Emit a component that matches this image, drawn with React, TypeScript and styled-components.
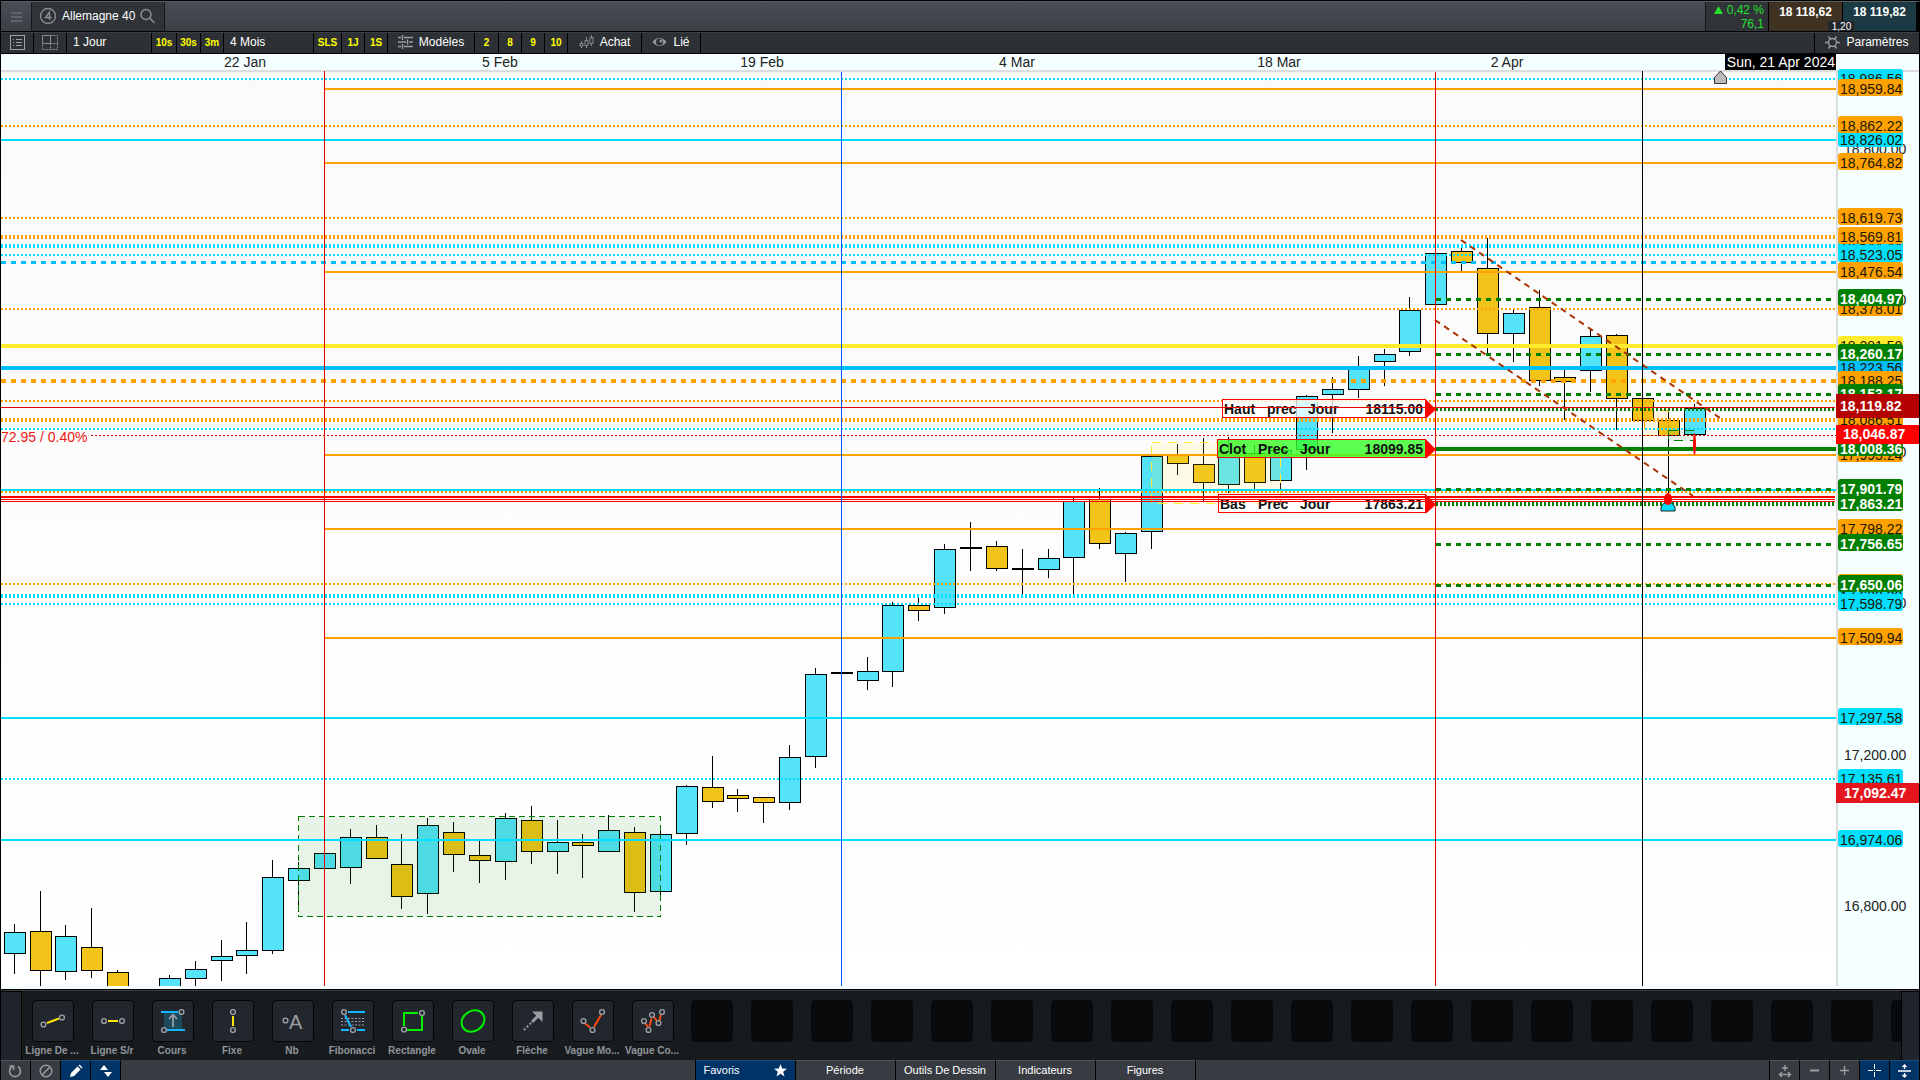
import React from 'react';
import styled, { createGlobalStyle } from 'styled-components';

const GlobalStyle = createGlobalStyle`
  * { box-sizing: border-box; }
  body {
    margin: 0;
    background: #000;
    font-family: "Liberation Sans", Arial, sans-serif;
    font-size: 12px;
  }
  button, select {
    margin: 0;
    padding: 0;
    border: 0;
    border-radius: 0;
    background: none;
    color: inherit;
    font: inherit;
  }
`;

/* ---------- colours ---------- */
const ORANGE = '#ffa200';
const CYAN = '#00dfff';
const SKY = '#00bfff';
const GREEN = '#008000';
const YELLOW = '#ffeb2d';
const RED = '#ff0000';
const UP = '#55e3f9';
const DOWN = '#f2c318';

/* ---------- shell ---------- */
const Shell = styled.div`
  display: flex;
  flex-direction: column;
  height: 100vh;
  padding: 1px 1px 0;
  background: #000;
  color: #fff;
  overflow: hidden;
`;

const Header = styled.header`
  display: flex;
  height: 30px;
  flex: none;
  background: linear-gradient(#494e56, #3b4047);
  border-top: 1px solid #5a5f66;
`;

const MenuButton = styled.button`
  display: grid;
  place-items: center;
  width: 31px;
  border-right: 1px solid #15181b;
`;

const MarketTab = styled.button`
  display: flex;
  align-items: center;
  gap: 5px;
  width: 133px;
  padding: 0 0 2px 7px;
  background: #303439;
  border-right: 1px solid #15181b;
`;

const Spacer = styled.div`
  flex: 1;
`;

const Change = styled.div`
  display: flex;
  flex-direction: column;
  align-items: flex-end;
  width: 63px;
  padding: 1px 4px 0 0;
  background: #303439;
  border-left: 1px solid #15181b;
  color: #22e02c;
  line-height: 14px;
  svg { margin-right: 4px; }
`;

const Quotes = styled.div`
  position: relative;
  display: flex;
  gap: 1px;
  padding: 0 3px 0 1px;
  background: #000;
`;

const Quote = styled.button<{ $bg: string }>`
  width: 73px;
  padding-bottom: 10px;
  background: ${(p) => p.$bg};
  color: #fff;
  font-weight: bold;
`;

const Spread = styled.span`
  position: absolute;
  right: 64px;
  bottom: 0;
  width: 27px;
  height: 10px;
  background: #23272b;
  font-size: 10px;
  line-height: 11px;
  text-align: center;
`;

const Toolbar = styled.nav`
  display: flex;
  flex: none;
  height: 21px;
  margin: 1px 0;
  background: #2d3135;
  border-top: 1px solid #393e43;
`;

const Tool = styled.button<{ $w: number }>`
  display: flex;
  align-items: center;
  justify-content: center;
  gap: 6px;
  flex: none;
  width: ${(p) => p.$w}px;
  padding-bottom: 2px;
  border-right: 1px solid #000;
`;

const Period = styled.select<{ $w: number }>`
  flex: none;
  appearance: none;
  width: ${(p) => p.$w}px;
  padding: 0 0 2px 6px;
  border-right: 1px solid #000;
`;

const Shortcut = styled(Tool)`
  color: #ffff00;
  font-size: 10px;
  font-weight: bold;
  padding-bottom: 1px;
`;

const Settings = styled(Tool)`
  border-right: 0;
  border-left: 1px solid #000;
`;

/* ---------- chart ---------- */
const TimeAxis = styled.div`
  position: relative;
  flex: none;
  height: 16px;
  background: #f5ffff;
  color: #222;
  font-size: 14px;
  line-height: 16px;
`;

const DateLabel = styled.span`
  position: absolute;
  top: 0;
  transform: translateX(-50%);
  white-space: nowrap;
`;

const CursorDate = styled.span`
  position: absolute;
  right: 83px;
  top: 0;
  height: 16px;
  padding: 0 1px 0 2px;
  background: #000;
  color: #fff;
  line-height: 16px;
  white-space: nowrap;
`;

const ChartArea = styled.main`
  display: grid;
  grid-template-columns: minmax(0, 1fr) 83px;
  flex: 1;
  min-height: 0;
  background: #f5ffff;
  padding-bottom: 3px;
`;

const Plot = styled.svg`
  display: block;
  width: 100%;
  height: 100%;
  background: linear-gradient(#fafafa, #fff);
  font-family: "Liberation Sans", Arial, sans-serif;
  font-size: 14px;
`;

const PriceAxis = styled.aside`
  position: relative;
  border-top: 2px solid #ddd;
  border-left: 2px solid #ddd;
  background: #f5ffff;
  color: #222;
  font-size: 14px;
  line-height: 21px;
`;

const AxisPrice = styled.span`
  position: absolute;
  left: 6px;
`;

const Tag = styled.span<{ $bg: string }>`
  position: absolute;
  left: 0;
  width: 65px;
  height: 17px;
  padding-left: 2px;
  border-radius: 3px;
  background: ${(p) => p.$bg};
  color: ${(p) => (p.$bg === GREEN ? '#fff' : '#1a1500')};
  font-weight: ${(p) => (p.$bg === GREEN ? 'bold' : 'normal')};
  overflow: hidden;
`;

const LiveTag = styled.span<{ $bg: string; $h: number; $pad: number }>`
  position: absolute;
  left: -2px;
  right: 0;
  height: ${(p) => p.$h}px;
  padding-left: ${(p) => p.$pad}px;
  background: ${(p) => p.$bg};
  color: #fff;
  font-weight: bold;
  line-height: ${(p) => p.$h}px;
`;

/* ---------- drawing tools ---------- */
const Palette = styled.section`
  display: flex;
  flex: none;
  height: 70px;
  margin-top: 1px;
  padding-top: 1px;
  border-top: 1px solid #3a3f44;
  background: #171b1e;
`;

const Edge = styled.div<{ $w: number }>`
  flex: none;
  width: ${(p) => p.$w}px;
  background: #20242c;
  outline: 1px solid #000;
`;

const Slots = styled.div`
  display: flex;
  flex: 1;
  min-width: 0;
  padding: 8px 0 0 1px;
  overflow: hidden;
`;

const Slot = styled.button`
  display: flex;
  flex: none;
  flex-direction: column;
  align-items: center;
  gap: 3px;
  width: 60px;
  color: #90959b;
  font-size: 10px;
  font-weight: bold;
  line-height: 12px;
  white-space: nowrap;
`;

const Tile = styled.span<{ $empty?: boolean }>`
  width: 42px;
  height: 42px;
  margin-left: ${(p) => (p.$empty ? 0 : 2)}px;
  border: 1px solid ${(p) => (p.$empty ? '#0b0c0e' : '#050607')};
  border-radius: 4px;
  background: ${(p) => (p.$empty ? '#090a0c' : '#22272e')};
  svg { display: block; margin: -1px; }
`;

const StatusBar = styled.footer`
  display: flex;
  flex: none;
  justify-content: space-between;
  height: 20px;
  background: #383b42;
`;

const Group = styled.div`
  display: flex;
`;

const StatusButton = styled.button<{ $on?: boolean; $left?: boolean }>`
  display: grid;
  place-items: center;
  width: 30px;
  border-top: 1px solid ${(p) => (p.$on ? '#1b4a7c' : '#505358')};
  border-right: ${(p) => (p.$left ? '0' : '1px solid #000')};
  border-left: ${(p) => (p.$left ? '1px solid #000' : '0')};
  background: ${(p) => (p.$on ? '#003366' : '#383b42')};
`;

const Tab = styled.button<{ $on?: boolean }>`
  display: flex;
  align-items: center;
  justify-content: ${(p) => (p.$on ? 'space-between' : 'center')};
  width: 100px;
  padding: 0 ${(p) => (p.$on ? 8 : 0)}px 1px;
  border-top: 1px solid ${(p) => (p.$on ? '#1b4a7c' : '#505358')};
  border-right: 1px solid #000;
  background: ${(p) => (p.$on ? '#003366' : '#383b42')};
  color: #fff;
  font-size: 11px;
`;

const Tabs = styled(Group)`
  border-left: 1px solid #000;
`;

/* ---------- chart data ---------- */
const PLOT_LEFT = 1;
const PLOT_TOP = 70;

type Kind = 'solid' | 'dash' | 'dot';
type Level = [y: number, color: string, width: number, kind: Kind, from?: number];

const levels: Level[] = [
  [79, CYAN, 2, 'dot'],
  [89, ORANGE, 2, 'solid', 324],
  [126, ORANGE, 2, 'dot'],
  [140, CYAN, 2, 'solid'],
  [163, ORANGE, 2, 'solid', 324],
  [218, ORANGE, 2, 'dot'],
  [237, ORANGE, 4, 'dot'],
  [246, CYAN, 4, 'dot'],
  [255, CYAN, 2, 'dot'],
  [262.5, SKY, 3, 'dash'],
  [272, ORANGE, 2, 'solid', 324],
  [299.5, GREEN, 3, 'dash', 1436],
  [309, ORANGE, 2, 'dot'],
  [346, YELLOW, 4, 'solid'],
  [354.5, GREEN, 3, 'dash', 1436],
  [368, SKY, 4, 'solid'],
  [381, ORANGE, 4, 'dash'],
  [394.5, GREEN, 3, 'dash', 1436],
  [401, ORANGE, 2, 'dot'],
  [409.5, GREEN, 3, 'dot', 1436],
  [420, ORANGE, 4, 'dot'],
  [429, CYAN, 2, 'dot'],
  [435.5, '#d00000', 1, 'dot', 91],
  [449, GREEN, 4, 'solid', 1436],
  [455, ORANGE, 2, 'solid', 324],
  [490, CYAN, 2, 'solid'],
  [489.5, GREEN, 3, 'dash', 1436],
  [492, ORANGE, 2, 'dot'],
  [504, GREEN, 4, 'dot', 1436],
  [529, ORANGE, 2, 'solid', 324],
  [544.5, GREEN, 3, 'dash', 1436],
  [584, ORANGE, 2, 'dot'],
  [585.5, GREEN, 3, 'dash', 1436],
  [596, CYAN, 4, 'dot'],
  [604, CYAN, 2, 'dot'],
  [638, ORANGE, 2, 'solid', 324],
  [718, CYAN, 2, 'solid'],
  [779, CYAN, 2, 'dot'],
  [840, CYAN, 2, 'solid'],
];

const redLevels: Level[] = [
  [407.5, '#e80000', 1, 'solid'],
  [497, RED, 2, 'solid'],
  [499.5, RED, 1, 'solid'],
  [501.5, RED, 1, 'solid'],
];

const dashes: Record<Kind, string | undefined> = { solid: undefined, dash: '5 5', dot: '2 2' };

/* centre, high, body top, body bottom, low, colour */
type Bar = [number, number, number, number, number, 'u' | 'd' | 'x'];
const bars: Bar[] = [
  [15, 924, 932, 954, 974, 'u'], [41, 891, 931, 971, 990, 'd'], [66, 925, 936, 972, 980, 'u'],
  [92, 908, 947, 971, 978, 'd'], [118, 970, 972, 1000, 1000, 'd'], [170, 975, 978, 1000, 1000, 'u'],
  [196, 961, 969, 979, 990, 'u'], [222, 940, 956, 961, 981, 'u'], [247, 922, 950, 956, 974, 'u'],
  [273, 860, 877, 951, 954, 'u'], [299, 862, 868, 881, 912, 'u'], [325, 853, 853, 869, 869, 'u'],
  [351, 829, 837, 868, 884, 'u'], [377, 825, 837, 859, 859, 'd'], [402, 834, 864, 897, 909, 'd'],
  [428, 818, 825, 894, 914, 'u'], [454, 822, 832, 855, 872, 'd'], [480, 841, 855, 861, 883, 'd'],
  [506, 813, 818, 862, 880, 'u'], [532, 806, 820, 852, 864, 'd'], [558, 820, 842, 852, 874, 'u'],
  [583, 834, 842, 846, 878, 'd'], [609, 815, 830, 852, 852, 'u'], [635, 827, 832, 893, 912, 'd'],
  [661, 830, 834, 892, 895, 'u'], [687, 785, 786, 834, 845, 'u'], [713, 756, 787, 802, 808, 'd'],
  [738, 789, 795, 799, 812, 'd'], [764, 797, 797, 803, 823, 'd'], [790, 745, 757, 803, 810, 'u'],
  [816, 668, 674, 757, 768, 'u'], [842, 672, 672, 674, 674, 'x'], [868, 657, 671, 681, 690, 'u'],
  [893, 602, 605, 672, 687, 'u'], [919, 598, 605, 611, 621, 'd'], [945, 544, 549, 608, 614, 'u'],
  [971, 522, 547, 549, 571, 'x'], [997, 541, 546, 569, 571, 'd'], [1023, 549, 568, 570, 594, 'x'],
  [1049, 549, 558, 570, 578, 'u'], [1074, 498, 501, 558, 594, 'u'], [1100, 488, 499, 544, 549, 'd'],
  [1126, 532, 533, 554, 582, 'u'], [1152, 456, 456, 532, 549, 'u'], [1178, 444, 455, 464, 475, 'd'],
  [1204, 438, 464, 483, 501, 'd'], [1229, 437, 451, 485, 493, 'u'], [1255, 445, 453, 483, 489, 'd'],
  [1281, 450, 450, 481, 504, 'u'], [1307, 395, 396, 450, 470, 'u'], [1333, 377, 389, 395, 433, 'u'],
  [1359, 356, 368, 390, 398, 'u'], [1385, 349, 354, 362, 386, 'u'], [1410, 297, 310, 352, 356, 'u'],
  [1436, 253, 253, 305, 305, 'u'], [1462, 248, 251, 263, 271, 'd'], [1488, 238, 268, 334, 354, 'd'],
  [1514, 310, 313, 334, 362, 'u'], [1540, 290, 307, 381, 386, 'd'], [1565, 370, 377, 382, 420, 'd'],
  [1591, 329, 336, 371, 392, 'u'], [1617, 334, 335, 399, 430, 'd'], [1643, 398, 398, 421, 421, 'd'],
  [1669, 411, 420, 436, 495, 'd'], [1695, 404, 408, 435, 435, 'u'],
];

const axisPrices: [string, number][] = [
  ['18,800.00', 149], ['18,400.00', 300], ['18,000.00', 452], ['17,600.00', 603],
  ['17,200.00', 755], ['16,800.00', 906],
];

const tags: [string, number, string][] = [
  ['18,986.56', 79, CYAN], ['18,959.84', 89, ORANGE], ['18,826.02', 140, CYAN],
  ['18,862.22', 126, ORANGE], ['18,764.82', 163, ORANGE], ['18,619.73', 218, ORANGE],
  ['18,544.44', 246, CYAN], ['18,569.81', 237, ORANGE], ['18,523.05', 255, CYAN],
  ['18,476.54', 272, ORANGE], ['18,378.01', 309, ORANGE], ['18,404.97', 299, GREEN],
  ['18,281.50', 346, YELLOW], ['18,223.56', 368, SKY], ['18,260.17', 354, GREEN],
  ['18,188.25', 381, ORANGE], ['18,153.17', 394, GREEN], ['18,086.51', 420, ORANGE],
  ['17,993.24', 455, ORANGE], ['18,008.36', 449, GREEN], ['17,895.20', 492, ORANGE],
  ['17,863.21', 504, GREEN], ['17,901.79', 489, GREEN], ['17,798.22', 529, ORANGE],
  ['17,756.65', 544, GREEN], ['17,620.30', 596, CYAN], ['17,651.90', 584, ORANGE],
  ['17,598.79', 604, CYAN], ['17,650.06', 585, GREEN], ['17,509.94', 638, ORANGE],
  ['17,297.58', 718, CYAN], ['17,135.61', 779, CYAN], ['16,974.06', 840, CYAN],
];

const dates: [string, number][] = [
  ['22 Jan', 245], ['5 Feb', 500], ['19 Feb', 762], ['4 Mar', 1017], ['18 Mar', 1279], ['2 Apr', 1507],
];

const Line = ({ level: [y, color, width, kind, from = 0] }: { level: Level }) => (
  <line x1={from} x2="100%" y1={y} y2={y} stroke={color} strokeWidth={width} strokeDasharray={dashes[kind]} />
);

const Candle = ({ bar: [x, high, top, bottom, low, type] }: { bar: Bar }) => (
  <g>
    <line x1={x - 0.5} x2={x - 0.5} y1={high} y2={low} stroke="#000" />
    {type === 'x' ? (
      <rect x={x - 11} y={top} width={22} height={2} />
    ) : (
      <rect x={x - 10.5} y={top + 0.5} width={21} height={bottom - top - 1} rx={1}
        fill={type === 'u' ? UP : DOWN} stroke="#000" />
    )}
  </g>
);

type NoteProps = { words: [string, number][]; value: string; x: number; y: number; fill: string };
const Note = ({ words, value, x, y, fill }: NoteProps) => (
  <g>
    <rect x={x + 0.5} y={y - 9} width={1425 - x} height={18} fill={fill} stroke={RED} />
    <polygon points={`1426,${y - 9} 1436,${y + 1} 1426,${y + 10}`} fill={RED} />
    <g fontWeight="bold" fill="#111">
      {words.map(([word, wx]) => <text key={word} x={wx} y={y + 5}>{word}</text>)}
      <text x={1423} y={y + 5} textAnchor="end">{value}</text>
    </g>
  </g>
);

const Chart = () => (
  <Plot role="img" aria-label="Allemagne 40">
    <rect width="100%" height="2" fill="#ddd" />
    <g transform={`translate(${-PLOT_LEFT} ${-PLOT_TOP})`}>
      <g shapeRendering="crispEdges">
        {bars.map((b) => <Candle key={b[0]} bar={b} />)}
        <rect x="1151.5" y="442.5" width="129" height="61" fill="rgba(255,235,59,.12)" stroke={YELLOW} strokeDasharray="9 7" />
        <rect x="298.5" y="816.5" width="362" height="100" fill="rgba(0,128,0,.09)" stroke={GREEN} strokeDasharray="6 4" />
        <rect x="1644.5" y="410.5" width="24" height="25" fill="rgba(255,162,0,.12)" stroke={ORANGE} strokeDasharray="9 7" />
        <rect x="1668.5" y="430.5" width="26" height="10" fill="rgba(0,128,0,.1)" stroke={GREEN} strokeDasharray="9 7" />
      </g>
      <g transform={`translate(${PLOT_LEFT} 0)`} shapeRendering="crispEdges">
        {levels.map((l, i) => <Line key={i} level={[l[0], l[1], l[2], l[3], l[4] ? l[4] - PLOT_LEFT : 0]} />)}
      </g>
      <g stroke="#a83200" strokeWidth="2" strokeDasharray="6 5">
        <line x1="1461" y1="240" x2="1720" y2="418" />
        <line x1="1435" y1="320" x2="1693" y2="496" />
      </g>
      <Note words={[['Haut', 1224], ['prec', 1267], ['Jour', 1308]]} value="18115.00" x={1222} y={408.5} fill="rgba(255,255,255,.78)" />
      <Note words={[['Clot', 1219], ['Prec', 1258], ['Jour', 1300]]} value="18099.85" x={1217} y={448.5} fill="rgba(54,255,40,.8)" />
      <Note words={[['Bas', 1220], ['Prec', 1258], ['Jour', 1300]]} value="17863.21" x={1218} y={503.5} fill="rgba(255,255,255,.6)" />
      <g shapeRendering="crispEdges">
        {redLevels.map((l) => <Line key={l[0]} level={l} />)}
        <line x1="324.5" x2="324.5" y1="71" y2="2000" stroke="#e80000" />
        <line x1="841.5" x2="841.5" y1="72" y2="2000" stroke="#0055ff" />
        <line x1="1435.5" x2="1435.5" y1="72" y2="2000" stroke="#e80000" />
        <line x1="1642.5" x2="1642.5" y1="71" y2="2000" stroke="#000" />
      </g>
      <polygon points="1664,503 1672,503 1675,507 1675,511 1661,511 1661,507" fill={CYAN} stroke="#222" />
      <ellipse cx="1668" cy="499" rx="4" ry="6" fill={RED} />
      <ellipse cx="1694.5" cy="444" rx="1.5" ry="11" fill={RED} />
      <polygon points="1720.5,71 1726.5,77.5 1726.5,83.5 1714.5,83.5 1714.5,77.5" fill="#bbb" stroke="#333" />
      <rect x="1" y="431" width="88" height="12" fill="#fbfbfb" />
      <text x="1" y="442" fill="#f01818">72.95 / 0.40%</text>
    </g>
  </Plot>
);

/* ---------- tool icons, drawn on the 42px tile ---------- */
const Knob = ({ x, y }: { x: number; y: number }) => (
  <ellipse cx={x} cy={y} rx="2.4" ry="2.4" fill="none" stroke="#9a9ea3" strokeWidth="1.4" />
);
const wave = { stroke: '#ff4a14', strokeWidth: 2 };
const blue = { stroke: '#12b5ff', strokeWidth: 2 };
const lime = { stroke: '#00f000', strokeWidth: 2, fill: 'none' };
const lemon = { stroke: '#ffe600', strokeWidth: 2 };

const tools: [string, React.ReactNode][] = [
  ['Ligne De ...', <><line x1="15" y1="23" x2="27" y2="18.5" {...lemon} /><Knob x={11.5} y={24.5} /><Knob x={30} y={17.5} /></>],
  ['Ligne S/r', <><line x1="16" y1="21" x2="26" y2="21" {...lemon} /><Knob x={12} y={21} /><Knob x={30} y={21} /></>],
  ['Cours', <>
    <rect x="12" y="12" width="18" height="18" fill="#1d4a5c" />
    <line x1="9" y1="12" x2="26" y2="12" {...blue} /><line x1="15" y1="30" x2="33" y2="30" {...blue} />
    <path d="M21 27V15M17 19l4-4.5 4 4.5" stroke="#9a9ea3" strokeWidth="1.8" fill="none" />
    <Knob x={29.5} y={12} /><Knob x={12} y={30} /></>],
  ['Fixe', <><line x1="21" y1="16" x2="21" y2="26" {...lemon} /><Knob x={21} y={12} /><Knob x={21} y={30} /></>],
  ['Nb', <><Knob x={13.5} y={20.5} /><text x="17" y="29" fontSize="20" fontFamily="Liberation Sans, sans-serif" fontWeight="400" fill="#9a9ea3">A</text></>],
  ['Fibonacci', <>
    <path d="M9 18.5h24M9 21.5h24M9 25h24" stroke="#9a9ea3" strokeDasharray="2 1.5" />
    <path d="M16 12h17M9 30h8M25 30h8M13 15l6 12" {...blue} fill="none" />
    <Knob x={12} y={12} /><Knob x={21} y={30} /></>],
  ['Rectangle', <><path d="M26 13H12V26M30 16V30H15" {...lime} /><Knob x={30} y={13} /><Knob x={12} y={29.5} /></>],
  ['Ovale', <ellipse cx="21" cy="21" rx="12" ry="10" transform="rotate(-35 21 21)" {...lime} />],
  ['Flèche', <>
    <path d="M12 30l9-9" stroke="#9a9ea3" strokeWidth="2" strokeDasharray="2 2" />
    <path d="M20 22l8-8" stroke="#9a9ea3" strokeWidth="3" /><path d="M20 11.5H30.5V22L27 18.5L23.5 15z" fill="#9a9ea3" /></>],
  ['Vague Mo...', <><path d="M13 23.5l5 4M22 27l7-12" {...wave} /><Knob x={11.5} y={21} /><Knob x={20.5} y={30} /><Knob x={30} y={12} /></>],
  ['Vague Co...', <>
    <path d="M13 23l3 4M17.5 26.500l2-8M22 17l3 4M27.500 20.500l1.500-6" {...wave} />
    <Knob x={12} y={21} /><Knob x={16.5} y={30} /><Knob x={20} y={15} /><Knob x={26.5} y={23} /><Knob x={30} y={12} /></>],
];

const periods: [string, number][] = [['10s', 25], ['30s', 24], ['3m', 23]];
const ranges: [string, number][] = [['SLS', 28], ['1J', 23], ['1S', 23]];
const templates: [string, number][] = [['2', 24], ['8', 23], ['9', 23], ['10', 23]];

const Shortcuts = ({ items }: { items: [string, number][] }) => (
  <>{items.map(([label, w]) => <Shortcut key={label} $w={w}>{label}</Shortcut>)}</>
);

export default function App() {
  return (
    <Shell>
      <GlobalStyle />
      <Header>
        <MenuButton aria-label="Menu">
          <svg width="11" height="12" stroke="#5f646b" strokeWidth="2"><path d="M0 2h11M0 6h11M0 10h11" /></svg>
        </MenuButton>
        <MarketTab>
          <svg width="18" height="18" fill="none" stroke="#8b8f94" strokeWidth="1.3">
            <circle cx="9" cy="9" r="7.5" /><path d="M10.500 13V5L6.500 10.500h6" />
          </svg>
          Allemagne 40
          <svg width="16" height="16" fill="none" stroke="#8b8f94" strokeWidth="1.4"><circle cx="6" cy="6.500" r="5" /><path d="M9.500 10l5 5" /></svg>
        </MarketTab>
        <Spacer />
        <Change>
          <span><svg width="9" height="8" fill="#22e02c"><path d="M0 8L4.500 0 9 8z" /></svg>0,42 %</span>
          <span>76,1</span>
        </Change>
        <Quotes>
          <Quote $bg="#3f3222">18 118,62</Quote>
          <Quote $bg="#1b3a43">18 119,82</Quote>
          <Spread>1,20</Spread>
        </Quotes>
      </Header>

      <Toolbar>
        <Tool $w={33} aria-label="Liste">
          <svg width="15" height="15" fill="none" stroke="#a0a3a6"><rect x=".5" y=".5" width="14" height="14" /><path d="M3 4.500h1M6 4.500h6M3 7.500h1M6 7.500h6M3 10.500h1M6 10.500h6" /></svg>
        </Tool>
        <Tool $w={33} aria-label="Disposition">
          <svg width="16" height="15" fill="none" stroke="#8a8d90"><path d="M.5.5h8v8h-8z" /><path d="M8.500.5h7v14H.5v-6M8.500 8.500v6M8.500 8.500h7" strokeDasharray="2 1" /></svg>
        </Tool>
        <Period $w={85} aria-label="Période"><option>1 Jour</option></Period>
        <Shortcuts items={periods} />
        <Period $w={90} aria-label="Durée"><option>4 Mois</option></Period>
        <Shortcuts items={ranges} />
        <Tool $w={87}>
          <svg width="15" height="14" stroke="#9a9da0" fill="none"><path d="M0 2.500h3M6 2.500h9M0 7h8M11 7h4M0 11.500h3M6 11.500h9M4.500 0v5M9.500 4.500v5M4.500 9v5" strokeWidth="1.4" /></svg>
          Modèles
        </Tool>
        <Shortcuts items={templates} />
        <Tool $w={74}>
          <svg width="15" height="14" stroke="#8a8d90" fill="none"><path d="M2.500 6v2M2.500 11v2M7.500 2v3M7.500 11v2M12.500 0v2M12.500 9v2M1 8.500h3v2.500H1zM6 5.500h3v5H6zM11 2.500h3v6h-3z" /></svg>
          Achat
        </Tool>
        <Tool $w={59}>
          <svg width="15" height="14"><path d="M.5 7C4 1.500 11 1.500 14.500 7 11 12.500 4 12.500.5 7z" fill="#95989b" /><circle cx="7.500" cy="7" r="3.500" fill="#2d3135" /><circle cx="9" cy="6" r="1.500" fill="#95989b" /></svg>
          Lié
        </Tool>
        <Spacer />
        <Settings $w={105}>
          <svg width="15" height="15" fill="none" stroke="#9a9da0"><circle cx="7.500" cy="7.500" r="4" strokeWidth="1.400" /><path d="M0 7.500h3M12 7.500h3M3.500 1.500l2 3M11.500 1.500l-2 3M3.500 13.500l2-3M11.500 13.500l-2-3" strokeWidth="1.400" /></svg>
          Paramètres
        </Settings>
      </Toolbar>

      <TimeAxis>
        {dates.map(([label, x]) => <DateLabel key={label} style={{ left: x - PLOT_LEFT }}>{label}</DateLabel>)}
        <CursorDate>Sun, 21 Apr 2024</CursorDate>
      </TimeAxis>
      <ChartArea>
        <Chart />
        <PriceAxis>
          {axisPrices.map(([p, y]) => <AxisPrice key={p} style={{ top: y - 82 }}>{p}</AxisPrice>)}
          {tags.map(([p, y, bg]) => <Tag key={p} $bg={bg} style={{ top: y - 82 }}>{p}</Tag>)}
          <LiveTag $bg="#b40000" $h={24} $pad={4} style={{ top: 322 }}>18,119.82</LiveTag>
          <LiveTag $bg="#ff0000" $h={19} $pad={7} style={{ top: 353 }}>18,046.87</LiveTag>
          <LiveTag $bg="#e3151d" $h={20} $pad={8} style={{ top: 711 }}>17,092.47</LiveTag>
        </PriceAxis>
      </ChartArea>

      <Palette>
        <Edge $w={20} />
        <Slots>
          {tools.map(([label, icon]) => (
            <Slot key={label}><Tile><svg width="42" height="42">{icon}</svg></Tile>{label}</Slot>
          ))}
          {Array.from({ length: 21 }, (_, i) => <Slot key={i} aria-label="Vide"><Tile $empty /></Slot>)}
        </Slots>
        <Edge $w={17} />
      </Palette>

      <StatusBar>
        <Group>
          <StatusButton aria-label="Rétablir"><svg width="15" height="14" fill="none" stroke="#9a9da0" strokeWidth="1.600"><path d="M10 2.500A5.500 5.500 0 1 1 4 2.500M1.500 2h4v4" /></svg></StatusButton>
          <StatusButton aria-label="Effacer"><svg width="14" height="14" fill="none" stroke="#9a9da0" strokeWidth="1.400"><circle cx="7" cy="7" r="5.800" /><path d="M3 11L11 3" /></svg></StatusButton>
          <StatusButton $on aria-label="Dessiner"><svg width="14" height="14" fill="#fff"><path d="M1 13l1-4 6.500-6.500 3 3L5 12zM9.500 1.500l1-1 3 3-1 1z" /></svg></StatusButton>
          <StatusButton $on aria-label="Trier"><svg width="12" height="12" fill="#fff"><path d="M0 5l4-5 4 5zM4 7h8l-4 5z" /></svg></StatusButton>
        </Group>
        <Tabs>
          <Tab $on>Favoris<svg width="13" height="13" fill="#fff"><path d="M6.500 0l1.700 4.500 4.800.2-3.800 3 1.300 4.800-4-2.800-4 2.800 1.300-4.800L0 4.700l4.800-.2z" /></svg></Tab>
          <Tab>Période</Tab>
          <Tab>Outils De Dessin</Tab>
          <Tab>Indicateurs</Tab>
          <Tab>Figures</Tab>
        </Tabs>
        <Group>
          <StatusButton $left aria-label="Ajuster"><svg width="14" height="14" fill="none" stroke="#9a9da0" strokeWidth="1.400"><path d="M7 1v6M4 4h6M1.500 10.500h11M4 8l-2.500 2.500L4 13M10 8l2.500 2.500L10 13" /></svg></StatusButton>
          <StatusButton $left aria-label="Zoom arrière"><svg width="9" height="9" stroke="#9a9da0" strokeWidth="2"><path d="M0 4.500h9" /></svg></StatusButton>
          <StatusButton $left aria-label="Zoom avant"><svg width="9" height="9" stroke="#9a9da0" strokeWidth="1.400"><path d="M0 4.500h9M4.500 0v9" /></svg></StatusButton>
          <StatusButton $left $on aria-label="Réticule"><svg width="13" height="13" stroke="#fff"><path d="M0 6.500h5M8 6.500h5M6.500 0v5M6.500 8v5M6 6.500h1" /></svg></StatusButton>
          <StatusButton $left $on aria-label="Hauteur"><svg width="13" height="14" stroke="#fff" fill="none"><path d="M0 7h13M6.500 1v4M6.500 9v4M4.500 3l2-2 2 2M4.500 11l2 2 2-2" strokeWidth="1.300" /></svg></StatusButton>
        </Group>
      </StatusBar>
    </Shell>
  );
}
